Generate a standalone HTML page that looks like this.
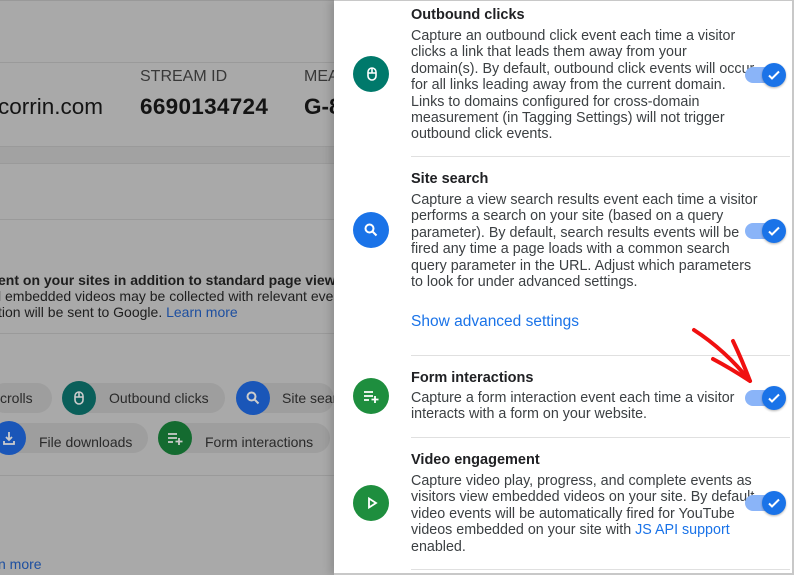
<!DOCTYPE html>
<html><head><meta charset="utf-8"><style>
*{margin:0;padding:0;box-sizing:border-box}
body{width:794px;height:575px;overflow:hidden;position:relative;background:#a9a9a9;font-family:"Liberation Sans",sans-serif}
.a{position:absolute;white-space:nowrap}
.hl{position:absolute;height:1px;background:#9a9a9a}
#panel{position:absolute;left:334px;top:0;width:460px;height:575px;background:#fff;border-top:1px solid #c8c8c8;border-right:2px solid #c8c8c8;border-bottom:2px solid #c8c8c8;box-shadow:-4px 0 8px rgba(0,0,0,.15)}
.t{position:absolute;left:77px;font-size:14.5px;font-weight:bold;color:#202124}
.d{position:absolute;left:77px;font-size:14.3px;line-height:16.4px;color:#3c4043}
.sep{position:absolute;left:77px;right:2px;height:1px;background:#e0e0e0}
.ic{position:absolute;left:19px;width:36px;height:36px;border-radius:50%}
.tg{position:absolute;left:411px;width:40px;height:16px;border-radius:8px;background:#8ab4f8}
.tg::after{content:"";position:absolute;left:17px;top:-4px;width:24px;height:24px;border-radius:50%;background:#1a73e8;box-shadow:0 1px 2px rgba(0,0,0,.3)}
.tg svg{position:absolute;left:21px;top:0;z-index:2}
a{color:#1a73e8}
.chip{position:absolute;height:30px;border-radius:15px;background:#9e9e9e}
.ci{position:absolute;width:34px;height:34px;border-radius:50%}
.lt{font-size:14px;color:#1e1e1e}
</style></head><body>
<div class="hl" style="left:0;top:0;width:334px;background:#999"></div>
<div class="hl" style="left:0;top:62px;width:334px"></div>
<div class="a" style="left:140px;top:68px;font-size:16px;color:#383838">STREAM ID</div>
<div class="a" style="left:304px;top:68px;font-size:16px;color:#383838">MEA</div>
<div class="a" style="left:-2px;top:94px;font-size:22.5px;color:#141414">corrin.com</div>
<div class="a" style="left:140px;top:94px;font-size:22.5px;font-weight:bold;color:#141414;letter-spacing:0.3px">6690134724</div>
<div class="a" style="left:304px;top:94px;font-size:22.5px;font-weight:bold;color:#141414">G-8</div>
<div class="hl" style="left:0;top:146px;width:334px"></div>
<div style="position:absolute;left:0;top:147px;width:334px;height:16px;background:#a2a2a2"></div>
<div class="hl" style="left:0;top:163px;width:334px"></div>
<div class="hl" style="left:0;top:219px;width:334px"></div>
<div class="a lt" style="left:-2px;top:272px;font-weight:bold">ent on your sites in addition to standard page view mea</div>
<div class="a lt" style="left:-2px;top:288px">l embedded videos may be collected with relevant ever</div>
<div class="a lt" style="left:-2px;top:304px">tion will be sent to Google. <a style="color:#1d4fa0">Learn more</a></div>
<div class="hl" style="left:0;top:333px;width:334px"></div>
<div class="chip" style="left:-10px;top:383px;width:62px"></div>
<div class="a" style="left:0;top:390px;font-size:14px;color:#2a2a2a">crolls</div>
<div class="chip" style="left:62px;top:383px;width:163px"></div>
<div class="ci" style="left:62px;top:381px;background:#0a5f5a"></div>
<svg class="a" style="left:71px;top:390px" width="16" height="16" viewBox="0 0 16 16" fill="none" stroke="#ccc" stroke-width="1.6"><rect x="4" y="2" width="8" height="12" rx="4"/><path d="M4 7h8M8 2v5"/></svg>
<div class="a" style="left:109px;top:390px;font-size:14px;color:#2a2a2a">Outbound clicks</div>
<div class="chip" style="left:236px;top:383px;width:98px"></div>
<div class="ci" style="left:236px;top:381px;background:#1a56b8"></div>
<svg class="a" style="left:244px;top:389px" width="18" height="18" viewBox="0 0 18 18" fill="none" stroke="#ccc" stroke-width="2"><circle cx="7.5" cy="7.5" r="4"/><path d="M10.5 10.5l4 4"/></svg>
<div class="a" style="left:282px;top:390px;font-size:14px;color:#2a2a2a">Site sear</div>
<div class="chip" style="left:-10px;top:423px;width:158px"></div>
<div class="ci" style="left:-8px;top:421px;background:#1a56b8"></div>
<svg class="a" style="left:1px;top:430px" width="16" height="16" viewBox="0 0 16 16" fill="none" stroke="#ccc" stroke-width="1.8"><path d="M8 2v8M5 7l3 3 3-3M3 11v3h10v-3"/></svg>
<div class="a" style="left:39px;top:434px;font-size:14px;color:#2a2a2a">File downloads</div>
<div class="chip" style="left:158px;top:423px;width:172px"></div>
<div class="ci" style="left:158px;top:421px;background:#146b30"></div>
<svg class="a" style="left:166px;top:430px" width="18" height="16" viewBox="0 0 18 16" fill="none" stroke="#ccc" stroke-width="1.8"><path d="M2 4h9M2 8h9M2 12h5M13 8v7M9.5 11.5h7"/></svg>
<div class="a" style="left:205px;top:434px;font-size:14px;color:#2a2a2a">Form interactions</div>
<div class="hl" style="left:0;top:475px;width:334px"></div>
<div class="a" style="left:-2px;top:556px;font-size:14px"><a style="color:#1d4fa0">n more</a></div>

<div id="panel">
<div class="t" style="top:6px">Outbound clicks</div>
<div class="d" style="top:27px">Capture an outbound click event each time a visitor<br>clicks a link that leads them away from your<br>domain(s). By default, outbound click events will occur<br>for all links leading away from the current domain.<br>Links to domains configured for cross-domain<br>measurement (in Tagging Settings) will not trigger<br>outbound click events.</div>
<div class="ic" style="top:55px;background:#00796b"></div>
<svg class="a" style="left:30px;top:65px" width="16" height="16" viewBox="0 0 16 16" fill="none" stroke="#fff" stroke-width="1.6"><rect x="4" y="2" width="8" height="12" rx="4"/><path d="M4 7h8M8 2v5"/></svg>
<div class="tg" style="top:66px"><svg width="16" height="16" viewBox="0 0 16 16"><path d="M3 8.5l3 3 7-7" stroke="#fff" stroke-width="2" fill="none"/></svg></div>
<div class="sep" style="top:155px"></div>

<div class="t" style="top:170px">Site search</div>
<div class="d" style="top:191px">Capture a view search results event each time a visitor<br>performs a search on your site (based on a query<br>parameter). By default, search results events will be<br>fired any time a page loads with a common search<br>query parameter in the URL. Adjust which parameters<br>to look for under advanced settings.</div>
<div class="ic" style="top:211px;background:#1a73e8"></div>
<svg class="a" style="left:28px;top:220px" width="18" height="18" viewBox="0 0 18 18" fill="none" stroke="#fff" stroke-width="2"><circle cx="7.5" cy="7.5" r="4"/><path d="M10.5 10.5l4 4"/></svg>
<div class="tg" style="top:222px"><svg width="16" height="16" viewBox="0 0 16 16"><path d="M3 8.5l3 3 7-7" stroke="#fff" stroke-width="2" fill="none"/></svg></div>
<div class="a" style="left:77px;top:312px;font-size:15.5px"><a>Show advanced settings</a></div>
<div class="sep" style="top:354px"></div>

<div class="t" style="top:369px">Form interactions</div>
<div class="d" style="top:389px">Capture a form interaction event each time a visitor<br>interacts with a form on your website.</div>
<div class="ic" style="top:377px;background:#1e8e3e"></div>
<svg class="a" style="left:28px;top:387px" width="18" height="16" viewBox="0 0 18 16" fill="none" stroke="#fff" stroke-width="1.8"><path d="M2 4h9M2 8h9M2 12h5M13 8v7M9.5 11.5h7"/></svg>
<div class="tg" style="top:389px"><svg width="16" height="16" viewBox="0 0 16 16"><path d="M3 8.5l3 3 7-7" stroke="#fff" stroke-width="2" fill="none"/></svg></div>
<div class="sep" style="top:436px"></div>

<div class="t" style="top:451px">Video engagement</div>
<div class="d" style="top:472px">Capture video play, progress, and complete events as<br>visitors view embedded videos on your site. By default,<br>video events will be automatically fired for YouTube<br>videos embedded on your site with <a>JS API support</a><br>enabled.</div>
<div class="ic" style="top:484px;background:#1e8e3e"></div>
<svg class="a" style="left:31px;top:495px" width="14" height="14" viewBox="0 0 14 14" fill="none" stroke="#fff" stroke-width="1.8"><path d="M4 2.5l7 4.5-7 4.5z"/></svg>
<div class="tg" style="top:494px"><svg width="16" height="16" viewBox="0 0 16 16"><path d="M3 8.5l3 3 7-7" stroke="#fff" stroke-width="2" fill="none"/></svg></div>
<div class="sep" style="top:568px"></div>
</div>

<svg class="a" style="left:0;top:0" width="794" height="575" viewBox="0 0 794 575" fill="none" stroke="#f01010" stroke-width="4" stroke-linecap="round" stroke-linejoin="round"><path d="M694 330 Q725 350 750 381"/><path d="M733 341 Q742 360 750 381 Q730 368 713 359"/></svg>
</body></html>
